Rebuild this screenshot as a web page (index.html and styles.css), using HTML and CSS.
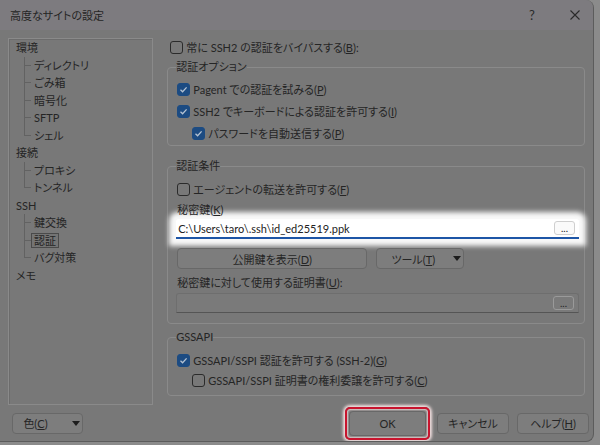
FILE: index.html
```html
<!DOCTYPE html>
<html>
<head>
    <link rel="stylesheet" href="styles.css">
</head>

<body>
    <div class="window">
        <div class="titlebar">
            <span class="title">高度なサイトの設定</span>
            <span class="caption-btn">?</span>
            <span class="caption-btn">
                <svg viewBox="0 0 10 10" width="10" height="10">
                    <path d="M0.5 0.5 L9.5 9.5 M9.5 0.5 L0.5 9.5" stroke="#2a2a2a" stroke-width="1.1" fill="none"/>
                </svg>
            </span>
        </div>

        <div class="main">
            <ul class="tree">
                <li>環境
                    <ul class="children">
                        <li>ディレクトリ</li>
                        <li>ごみ箱</li>
                        <li>暗号化</li>
                        <li>SFTP</li>
                        <li>シェル</li>
                    </ul>
                </li>
                <li>接続
                    <ul class="children">
                        <li>プロキシ</li>
                        <li>トンネル</li>
                    </ul>
                </li>
                <li>SSH
                    <ul class="children">
                        <li>鍵交換</li>
                        <li><span class="selected">認証</span></li>
                        <li>バグ対策</li>
                    </ul>
                </li>
                <li>メモ</li>
            </ul>

            <div class="pane">
                <label class="check bypass"><span class="box"></span><span>常に SSH2 の認証をバイパスする(<u>B</u>):</span></label>

                <fieldset class="group options">
                    <legend>認証オプション</legend>
                    <label class="check"><span class="box checked"></span><span>Pagent での認証を試みる(<u>P</u>)</span></label>
                    <label class="check"><span class="box checked"></span><span>SSH2 でキーボードによる認証を許可する(<u>I</u>)</span></label>
                    <label class="check sub"><span class="box checked"></span><span>パスワードを自動送信する(<u>P</u>)</span></label>
                </fieldset>

                <fieldset class="group params">
                    <legend>認証条件</legend>
                    <label class="check"><span class="box"></span><span>エージェントの転送を許可する(<u>F</u>)</span></label>
                    <div class="field-label">秘密鍵(<u>K</u>)</div>
                    <div class="file-input keyfile">
                        <span class="path">C:\Users\taro\.ssh\id_ed25519.ppk</span>
                        <span class="browse">...</span>
                    </div>
                    <div class="button-row">
                        <button class="btn pubkey"><span>公開鍵を表示(<u>D</u>)</span></button>
                        <button class="btn tools"><span>ツール(<u>T</u>)</span>
                            <svg viewBox="0 0 8 5" width="8" height="5"><path d="M0 0 H8 L4 5 Z" fill="#1d1d1d"/></svg>
                        </button>
                    </div>
                    <div class="field-label cert">秘密鍵に対して使用する証明書(<u>U</u>):</div>
                    <div class="file-input">
                        <span class="path"></span>
                        <span class="browse">...</span>
                    </div>
                </fieldset>

                <fieldset class="group gssapi">
                    <legend>GSSAPI</legend>
                    <label class="check"><span class="box checked"></span><span>GSSAPI/SSPI 認証を許可する (SSH-2)(<u>G</u>)</span></label>
                    <label class="check sub"><span class="box"></span><span>GSSAPI/SSPI 証明書の権利委譲を許可する(<u>C</u>)</span></label>
                </fieldset>
            </div>
        </div>

        <div class="footer">
            <button class="btn color"><span>色(<u>C</u>)</span>
                <svg viewBox="0 0 8 5" width="8" height="5"><path d="M0 0 H8 L4 5 Z" fill="#1d1d1d"/></svg>
            </button>
            <div class="actions">
                <span class="highlight"><button class="btn ok">OK</button></span>
                <button class="btn">キャンセル</button>
                <button class="btn"><span>ヘルプ(<u>H</u>)</span></button>
            </div>
        </div>
    </div>
</body>
</html>
```

FILE: styles.css
```css
:root {
    --bg: #787878;
    --title-bg: #7d7b7f;
    --text: #252525;
    --line: #8a8a8a;
    --btn-bg: #7d7d7d;
    --btn-border: #686868;
    --check-fill: #1c4b82;
    --red: #c8142e;
}

* {
    box-sizing: border-box;
}

body {
    margin: 0;
    width: 600px;
    height: 445px;
    overflow: hidden;
    background: #8b8b8b;
    font-family: Lato, "Noto Sans CJK JP", sans-serif;
    font-size: 11px;
    font-feature-settings: "palt";
    color: var(--text);
}

u {
    text-underline-offset: 1px;
}

.window {
    width: 594px;
    height: 442px;
    display: flex;
    flex-direction: column;
    background: var(--bg);
    border-right: 1px solid #5c5c5c;
    border-bottom: 1px solid #5c5c5c;
    border-radius: 0 8px 8px 0;
    overflow: hidden;
}

/* title bar */
.titlebar {
    height: 30px;
    display: flex;
    align-items: center;
    gap: 7px;
    padding-left: 10px;
    background: var(--title-bg);
}

.title {
    flex: 1;
}

.caption-btn {
    width: 36px;
    display: flex;
    justify-content: center;
    font-size: 13px;
    color: #2a2a2a;
}

/* body */
.main {
    display: flex;
    height: 375px;
    padding: 8px 8px 0 8px;
}

.tree {
    width: 146px;
    height: 367px;
    margin: 0;
    padding: 0 0 0 7px;
    list-style: none;
    border: 1px solid var(--line);
    box-shadow: inset 1px 1px 0 #6c6c6c;
    line-height: 17.5px;
}

.tree ul {
    list-style: none;
    margin: 0 0 0 8px;
    padding: 0;
}

.children li {
    padding-left: 10px;
    background:
        linear-gradient(#626262, #626262) 0 0 / 1px 100% no-repeat,
        linear-gradient(#626262, #626262) 0 50% / 7px 1px no-repeat;
}

.children li:last-child {
    background-size: 1px 50%, 7px 1px;
}

.selected {
    margin-left: -3px;
    padding: 0 2px;
    border: 1px solid #4a4a4a;
    background: #747474;
}

.pane {
    width: 420px;
    margin-left: 14px;
}

.check {
    display: flex;
    align-items: center;
    gap: 3px;
    height: 22px;
    white-space: nowrap;
}

.check.sub {
    margin-left: 15px;
}

.bypass {
    height: 18px;
    margin-left: 3px;
}

.box {
    width: 13px;
    height: 13px;
    flex: none;
    border: 1px solid #2b2b2b;
    border-radius: 3px;
}

.box.checked {
    border-color: var(--check-fill);
    background: var(--check-fill) url("data:image/svg+xml;utf8,<svg xmlns='http://www.w3.org/2000/svg' viewBox='0 0 11 11'><path d='M2.5 5.8 L4.6 7.8 L8.6 3.4' stroke='%23b4c2d2' stroke-width='1.3' fill='none'/></svg>") center / 11px 11px no-repeat;
}

/* group boxes */
.group {
    margin: 0;
    padding: 0 5px 0 9px;
    border: 1px solid var(--line);
    border-radius: 4px;
}

.group legend {
    padding: 0;
    margin-left: -1px;
    line-height: 16px;
}

.options {
    margin-top: 3px;
    padding-top: 3px;
    padding-bottom: 1px;
}

.params {
    margin-top: 12px;
    padding-top: 4px;
    padding-bottom: 10px;
}

.gssapi {
    margin-top: 5px;
    padding-top: 5px;
    padding-bottom: 5px;
}

.gssapi .check {
    height: 20px;
}

.field-label {
    height: 19px;
    line-height: 20px;
}

.field-label.cert {
    height: 24px;
    line-height: 28px;
}

.file-input {
    height: 20px;
    margin-left: -1px;
    display: flex;
    align-items: center;
    justify-content: space-between;
    padding: 0 4px 0 2px;
    background: #7a7a7a;
    border: 1px solid #6e6e6e;
    border-bottom-color: #555;
    border-radius: 3px 3px 0 0;
}

.keyfile {
    background: #fff;
    border: none;
    border-bottom: 2px solid #1d55a6;
    box-shadow: 0 0 5px 7px rgba(255, 255, 255, 0.95);
    color: #222;
}

.browse {
    width: 21px;
    height: 14px;
    border: 1px solid #9a9a9a;
    border-radius: 3px;
    font-size: 10px;
    line-height: 12px;
    text-align: center;
}

.keyfile .browse {
    border-color: #cfcfcf;
    background: #fafafa;
}

.button-row {
    display: flex;
    gap: 9px;
    margin-top: 9px;
}

.btn {
    height: 21px;
    padding: 0;
    border: 1px solid var(--btn-border);
    border-radius: 4px;
    background: var(--btn-bg);
    font: inherit;
    color: var(--text);
    display: flex;
    align-items: center;
    justify-content: center;
    white-space: nowrap;
}

.pubkey {
    width: 190px;
}

.tools {
    width: 88px;
    gap: 18px;
    padding-left: 12px;
}

/* footer */
.footer {
    flex: 1;
    display: flex;
    align-items: center;
    padding: 0 4px 0 12px;
}

.btn.color {
    width: 71px;
    gap: 24px;
    padding-left: 8px;
}

.actions {
    margin-left: auto;
    display: flex;
    align-items: center;
    gap: 8px;
}

.actions .btn {
    width: 72px;
}

.highlight {
    margin-right: -1px;
    padding: 2px;
    border: 2px solid var(--red);
    border-radius: 5px;
    box-shadow: 0 0 3px 2px rgba(255, 235, 235, 0.9), inset 0 0 2px 1px rgba(255, 235, 235, 0.8);
}

.actions .btn.ok {
    width: 77px;
    height: 25px;
}
```
